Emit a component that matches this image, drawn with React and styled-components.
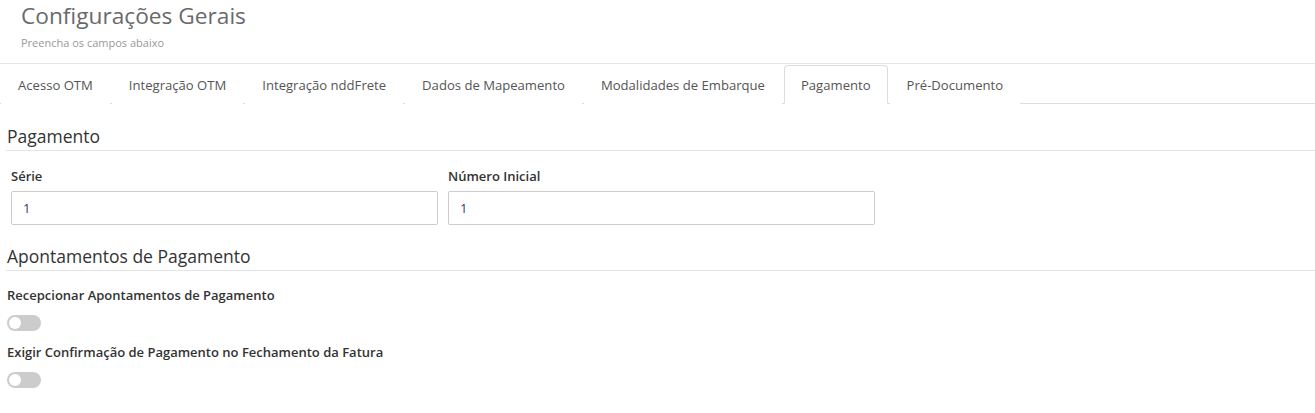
import styled, { createGlobalStyle } from 'styled-components'

const GlobalStyle = createGlobalStyle`
  body {
    margin: 0;
    background: #fff;
    font-family: "Open Sans", "Noto Sans", sans-serif;
    color: #333;
  }
`

const Header = styled.div`
  height: 63px;
  padding: 0 21px;
  border-bottom: 1px solid #e5e5e5;
  box-sizing: content-box;
`

const Title = styled.h1`
  margin: 0;
  font-size: 22.7px;
  font-weight: 400;
  line-height: 31px;
  color: #676a6c;
`

const Subtitle = styled.div`
  margin-top: 4px;
  font-size: 11px;
  line-height: 16px;
  color: #999;
`

const TabBar = styled.ul`
  list-style: none;
  margin: 0;
  padding: 1px 0 0 1px;
  display: flex;
  border-bottom: 1px solid #ddd;
`

const Tab = styled.li`
  box-sizing: border-box;
  height: 39px;
  margin: 0 2px -1px 0;
  padding: 0 16px;
  display: flex;
  align-items: center;
  font-size: 13.1px;
  color: #555;
  border: 1px solid ${p => (p.active ? '#ddd' : 'transparent')};
  border-bottom-color: ${p => (p.active ? '#fff' : 'transparent')};
  border-radius: 4px 4px 0 0;
  background: #fff;
  cursor: pointer;
`

const Content = styled.div`
  padding: 0 0 0 6px;
`

const SectionTitle = styled.h3`
  margin: ${p => p.top}px 0 0;
  padding: 0 0 2px 1px;
  font-size: 17.5px;
  font-weight: 500;
  line-height: 24px;
  color: #333;
  border-bottom: 1px solid #e5e5e5;
`

const FieldRow = styled.div`
  display: grid;
  grid-template-columns: 437px 437px;
  margin-top: 16px;
`

const Field = styled.div`
  padding: 0 5px;
`

const Label = styled.label`
  display: block;
  font-size: 13px;
  font-weight: 600;
  line-height: 18px;
  color: #333;
`

const Input = styled.input`
  display: block;
  box-sizing: border-box;
  width: 100%;
  height: 34px;
  margin-top: 6px;
  padding: 0 11px;
  border: 1px solid #ccc;
  border-radius: 2px;
  font-family: inherit;
  font-size: 13px;
  color: #3f2d7c;
  outline: none;
`

const ToggleGroup = styled.div`
  margin-top: ${p => p.top}px;
  padding-left: 1px;
`

const Switch = styled.span`
  display: block;
  position: relative;
  width: 34px;
  height: 16px;
  margin-top: 11px;
  border-radius: 8px;
  background: #ccc;

  &::after {
    content: '';
    position: absolute;
    left: 2px;
    top: 2px;
    width: 12px;
    height: 12px;
    border-radius: 50%;
    background: #fff;
  }
`

const tabs = [
  'Acesso OTM',
  'Integração OTM',
  'Integração nddFrete',
  'Dados de Mapeamento',
  'Modalidades de Embarque',
  'Pagamento',
  'Pré-Documento',
]

const Toggle = ({ label, top }) => (
  <ToggleGroup top={top}>
    <Label>{label}</Label>
    <Switch />
  </ToggleGroup>
)

export default function App() {
  return (
    <>
      <GlobalStyle />
      <Header>
        <Title>Configurações Gerais</Title>
        <Subtitle>Preencha os campos abaixo</Subtitle>
      </Header>
      <TabBar>
        {tabs.map(t => (
          <Tab key={t} active={t === 'Pagamento'}>{t}</Tab>
        ))}
      </TabBar>
      <Content>
        <SectionTitle top={20}>Pagamento</SectionTitle>
        <FieldRow>
          <Field>
            <Label>Série</Label>
            <Input defaultValue="1" />
          </Field>
          <Field>
            <Label>Número Inicial</Label>
            <Input defaultValue="1" />
          </Field>
        </FieldRow>
        <SectionTitle top={19}>Apontamentos de Pagamento</SectionTitle>
        <Toggle top={15} label="Recepcionar Apontamentos de Pagamento" />
        <Toggle top={12} label="Exigir Confirmação de Pagamento no Fechamento da Fatura" />
      </Content>
    </>
  )
}
